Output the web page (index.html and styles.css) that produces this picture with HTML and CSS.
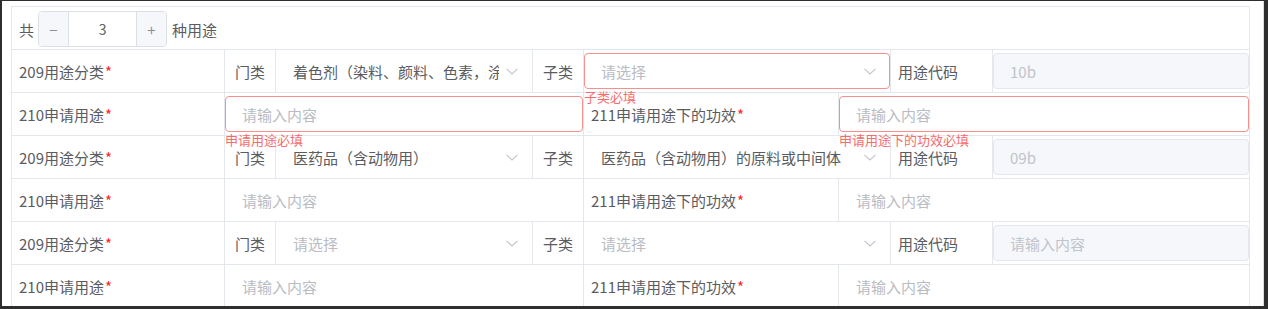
FILE: index.html
```html
<!DOCTYPE html>
<html lang="zh-CN">
<head>
<meta charset="utf-8">
<title>用途</title>
<link rel="stylesheet" href="styles.css">
</head>
<body>
<div class="frame">
  <div class="sheet">
    <div class="grid">
      <div class="cell full count-row">
        <span>共</span>
        <div class="num">
          <span class="num-btn">−</span>
          <span class="num-val">3</span>
          <span class="num-btn plus">+</span>
        </div>
        <span>种用途</span>
      </div>

      <!-- group 1 -->
      <div class="cell label">209用途分类<i class="req">*</i></div>
      <div class="cell mini">门类</div>
      <div class="cell field"><div class="box sel"><span class="val">着色剂（染料、颜料、色素，涂料）</span><svg class="arrow" viewBox="0 0 12 7"><path d="M0.5 0.8 L6 6 L11.5 0.8"/></svg></div></div>
      <div class="cell mini">子类</div>
      <div class="cell field two"><div class="box sel err"><span class="val ph">请选择</span><svg class="arrow" viewBox="0 0 12 7"><path d="M0.5 0.8 L6 6 L11.5 0.8"/></svg></div><div class="msg">子类必填</div></div>
      <div class="cell label">用途代码</div>
      <div class="cell field"><div class="box dis"><span class="val">10b</span></div></div>

      <div class="cell label">210申请用途<i class="req">*</i></div>
      <div class="cell field wide"><div class="box err"><span class="val ph">请输入内容</span></div><div class="msg">申请用途必填</div></div>
      <div class="cell label">211申请用途下的功效<i class="req">*</i></div>
      <div class="cell field wide"><div class="box err"><span class="val ph">请输入内容</span></div><div class="msg">申请用途下的功效必填</div></div>

      <!-- group 2 -->
      <div class="cell label">209用途分类<i class="req">*</i></div>
      <div class="cell mini">门类</div>
      <div class="cell field"><div class="box sel"><span class="val">医药品（含动物用）</span><svg class="arrow" viewBox="0 0 12 7"><path d="M0.5 0.8 L6 6 L11.5 0.8"/></svg></div></div>
      <div class="cell mini">子类</div>
      <div class="cell field two"><div class="box sel"><span class="val">医药品（含动物用）的原料或中间体</span><svg class="arrow" viewBox="0 0 12 7"><path d="M0.5 0.8 L6 6 L11.5 0.8"/></svg></div></div>
      <div class="cell label">用途代码</div>
      <div class="cell field"><div class="box dis"><span class="val">09b</span></div></div>

      <div class="cell label">210申请用途<i class="req">*</i></div>
      <div class="cell field wide"><div class="box"><span class="val ph">请输入内容</span></div></div>
      <div class="cell label">211申请用途下的功效<i class="req">*</i></div>
      <div class="cell field wide"><div class="box"><span class="val ph">请输入内容</span></div></div>

      <!-- group 3 -->
      <div class="cell label">209用途分类<i class="req">*</i></div>
      <div class="cell mini">门类</div>
      <div class="cell field"><div class="box sel"><span class="val ph">请选择</span><svg class="arrow" viewBox="0 0 12 7"><path d="M0.5 0.8 L6 6 L11.5 0.8"/></svg></div></div>
      <div class="cell mini">子类</div>
      <div class="cell field two"><div class="box sel"><span class="val ph">请选择</span><svg class="arrow" viewBox="0 0 12 7"><path d="M0.5 0.8 L6 6 L11.5 0.8"/></svg></div></div>
      <div class="cell label">用途代码</div>
      <div class="cell field"><div class="box dis"><span class="val ph">请输入内容</span></div></div>

      <div class="cell label">210申请用途<i class="req">*</i></div>
      <div class="cell field wide"><div class="box"><span class="val ph">请输入内容</span></div></div>
      <div class="cell label">211申请用途下的功效<i class="req">*</i></div>
      <div class="cell field wide"><div class="box"><span class="val ph">请输入内容</span></div></div>
    </div>
  </div>
</div>
</body>
</html>
```

FILE: styles.css
```css
* { box-sizing: border-box; }

html, body {
  margin: 0;
  padding: 0;
  background: #ffffff;
}

body {
  font-family: "Noto Sans CJK SC", "Microsoft YaHei", sans-serif;
  font-size: 15px;
  color: #5a5c61;
}

.frame {
  width: 1268px;
  height: 309px;
  overflow: hidden;
  border-style: solid;
  border-color: #2e2e2e;
  border-width: 1px 4px 3px 2px;
  background: #ffffff;
}

.sheet {
  height: 100%;
  padding: 5px 0 0 9px;
  border-right: 1px solid #dcdcdc;
}

.grid {
  display: grid;
  width: 1239px;
  grid-template-columns: 213px 51px 257px 51px 255px 52px 102px 257px;
  grid-auto-rows: 43px;
  border-left: 1px solid #e4e7ed;
  border-top: 1px solid #e4e7ed;
}

.cell {
  position: relative;
  display: flex;
  align-items: center;
  border-right: 1px solid #e4e7ed;
  border-bottom: 1px solid #e4e7ed;
  white-space: nowrap;
  min-width: 0;
}

.full { grid-column: 1 / -1; }
.wide { grid-column: span 3; }
.two { grid-column: span 2; }

.label { padding-left: 7px; }
.mini { justify-content: center; }

.req {
  font-style: normal;
  color: #ff1f1f;
  margin-left: 1px;
}

/* count row */
.count-row {
  padding: 2px 0 0 7px;
  gap: 4px;
}
.count-row > span:last-child { margin-left: 1px; }

.num {
  display: flex;
  width: 129px;
  height: 36px;
  border: 1px solid #dcdfe6;
  border-radius: 4px;
  overflow: hidden;
}
.num-btn {
  width: 30px;
  display: flex;
  align-items: center;
  justify-content: center;
  background: #f5f7fa;
  color: #8c8f96;
  border-right: 1px solid #dcdfe6;
  font-size: 15px;
}
.num-btn.plus {
  border-right: 0;
  border-left: 1px solid #dcdfe6;
}
.num-val {
  flex: 1;
  display: flex;
  align-items: center;
  justify-content: center;
  font-size: 14px;
  color: #606266;
}

/* inputs */
.box {
  width: 100%;
  height: 36px;
  display: flex;
  align-items: center;
  padding: 0 16px;
  border: 1px solid transparent;
  border-radius: 4px;
  background: #ffffff;
}
.box .val {
  flex: 1;
  min-width: 0;
  overflow: hidden;
  white-space: nowrap;
}
.box .ph { color: #b9bcc3; }

.sel { padding-right: 13px; }
.arrow {
  width: 12px;
  height: 7px;
  margin-left: 7px;
  flex: none;
  fill: none;
  stroke: #c0c4cc;
  stroke-width: 1.1;
}

.err { border-color: #f78f8f; }

.dis {
  background: #f5f7fa;
  border-color: #e4e7ed;
  color: #c0c4cc;
}
.dis .val { color: #c0c4cc; }

.msg {
  position: absolute;
  left: 0;
  top: 40px;
  font-size: 13px;
  line-height: 13px;
  color: #f56c6c;
  z-index: 2;
}
```
